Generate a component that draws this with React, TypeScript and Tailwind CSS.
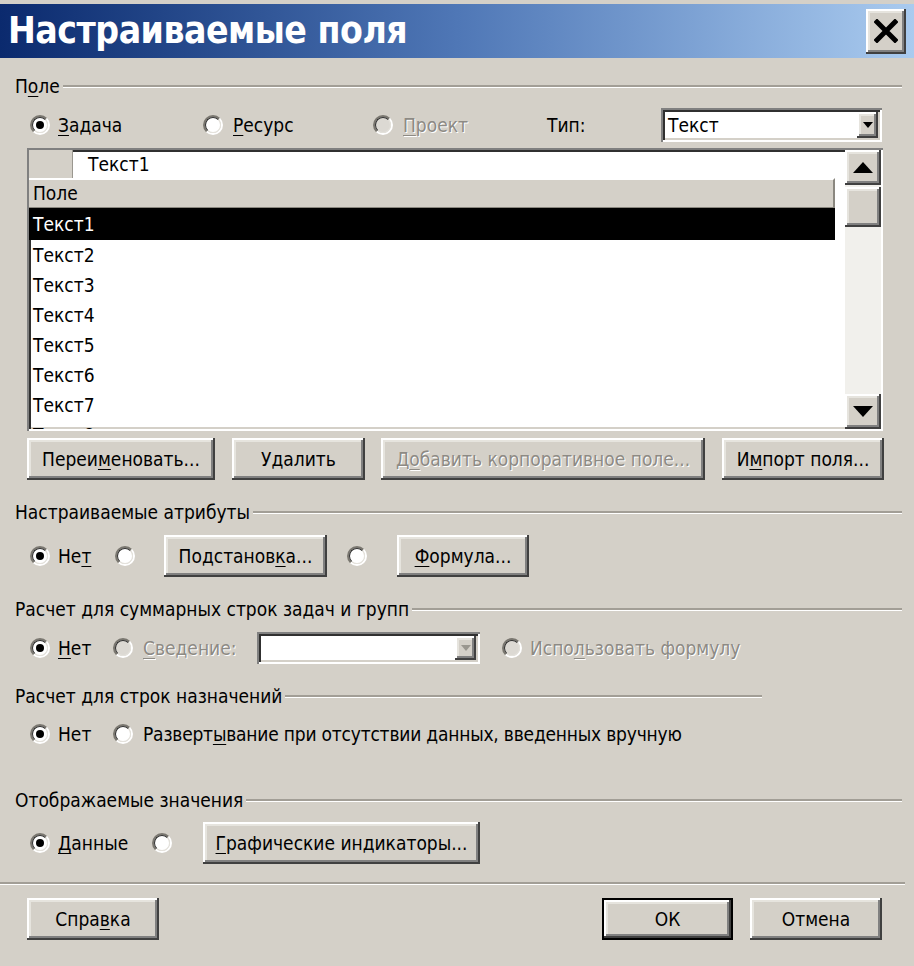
import React from 'react';

const FONT = "font-['DejaVu_Sans_Condensed','DejaVu_Sans',sans-serif]";
const RAISED =
  'bg-[#d4d0c8] shadow-[inset_-2px_-2px_0_#404040,inset_2px_2px_0_#ffffff,inset_-4px_-4px_0_#808080,inset_4px_4px_0_#e6e4de]';
const SUNKEN =
  'shadow-[inset_2px_2px_0_#808080,inset_-2px_-2px_0_#ffffff,inset_4px_4px_0_#303030,inset_-4px_-4px_0_#d4d0c8]';
const DISABLED = 'text-[#8d8a84] [text-shadow:1px_1px_0_#ffffff]';

// letter with access-key underline
const U = ({ children }: { children: React.ReactNode }) => (
  <span className="underline underline-offset-[3px] decoration-1">{children}</span>
);

function Radio({ checked = false, disabled = false }: { checked?: boolean; disabled?: boolean }) {
  return (
    <div className="relative w-[20px] h-[20px] shrink-0 rounded-full border-2 border-t-[#7a7770] border-l-[#7a7770] border-b-[#ffffff] border-r-[#ffffff]">
      <div className={`absolute inset-0 rounded-full border-[1.5px] border-t-[#303030] border-l-[#303030] border-b-[#e4e2dc] border-r-[#e4e2dc] ${disabled ? 'bg-[#dcd9d3]' : 'bg-white'}`} />
      {checked && <div className="absolute left-1/2 top-1/2 w-[8px] h-[8px] -ml-[4px] -mt-[4px] rounded-full bg-black" />}
    </div>
  );
}

function Btn({ w, children, disabled = false, def = false }: { w: string; children: React.ReactNode; disabled?: boolean; def?: boolean }) {
  const inner = (
    <div className={`${RAISED} h-full w-full flex items-center justify-center ${disabled ? DISABLED : 'text-black'}`}>
      {children}
    </div>
  );
  if (def) {
    return <div className={`${w} h-[42px] shrink-0 border-2 border-black`}>{inner}</div>;
  }
  return <div className={`${w} h-[42px] shrink-0`}>{inner}</div>;
}

function GroupHeader({ children, end = 'pr-[12px]' }: { children: React.ReactNode; end?: string }) {
  return (
    <div className={`flex items-center h-[20px] pl-[15px] ${end}`}>
      <span className="whitespace-nowrap">{children}</span>
      <div className="flex-1 ml-[3px] h-[3px] border-t-2 border-t-[#a29e96] border-b border-b-white" />
    </div>
  );
}

function ArrowDown({ color = '#000', size = 'small' }: { color?: string; size?: 'small' | 'big' }) {
  return size === 'big' ? (
    <svg width="20" height="12" viewBox="0 0 20 12"><path d="M0 0 H20 L10 11 Z" fill={color} /></svg>
  ) : (
    <svg width="10" height="6" viewBox="0 0 10 6"><path d="M0 0 H10 L5 6 Z" fill={color} /></svg>
  );
}

function Combo({ w, value, disabled = false }: { w: string; value?: string; disabled?: boolean }) {
  return (
    <div className={`${w} h-full shrink-0 bg-white ${SUNKEN} p-[4px] flex`}>
      <div className="flex-1 flex items-center pl-[3px] text-black">{value}</div>
      <div className={`${RAISED} w-[21px] h-full flex items-center justify-center`}>
        <ArrowDown color={disabled ? '#9a978f' : '#000'} />
      </div>
    </div>
  );
}

const ROWS = ['Текст2', 'Текст3', 'Текст4', 'Текст5', 'Текст6', 'Текст7', 'Текст8'];

export default function App() {
  return (
    <div className={`w-[914px] h-[966px] bg-[#d4d0c8] overflow-hidden text-[19px] leading-none text-black ${FONT}`}>
      {/* title bar */}
      <div className="pt-[4px]">
        <div className="h-[54px] bg-linear-to-r from-[#0b2a6e] via-[#4f77b6] to-[#aacbef] flex items-center justify-between pl-[8px] pr-[8px]">
          <span className="text-white font-bold text-[37px] tracking-[-0.5px] leading-none pb-[2px]">Настраиваемые поля</span>
          <div className={`${RAISED} w-[40px] h-[45px] flex items-center justify-center`}>
            <svg width="24" height="24" viewBox="0 0 24 24">
              <path d="M3 3 L21 21 M21 3 L3 21" stroke="#000" strokeWidth="5" strokeLinecap="square" />
            </svg>
          </div>
        </div>
      </div>

      <div className="mt-[18px]">
        <GroupHeader>П<U>о</U>ле</GroupHeader>
      </div>

      {/* radio row */}
      <div className="mt-[12px] h-[34px] flex items-center pl-[30px]">
        <div className="w-[173px] flex items-center">
          <Radio checked />
          <span className="ml-[8px]"><U>З</U>адача</span>
        </div>
        <div className="w-[170px] flex items-center">
          <Radio />
          <span className="ml-[10px]"><U>Р</U>есурс</span>
        </div>
        <div className="w-[174px] flex items-center">
          <Radio disabled />
          <span className={`ml-[10px] ${DISABLED}`}><U>П</U>роект</span>
        </div>
        <div className="w-[114px]">Тип:</div>
        <Combo w="w-[221px]" value="Текст" />
      </div>

      {/* list */}
      <div className={`mt-[6px] ml-[27px] w-[856px] h-[283px] bg-white ${SUNKEN} p-[2px] flex`}>
        <div className="flex-1 overflow-hidden flex flex-col">
          <div className="h-[28px] shrink-0 flex">
            <div className="w-[44px] bg-[#d4d0c8] border-r border-[#9a978f]" />
            <div className="flex-1 flex items-center pl-[15px]">Текст1</div>
          </div>
          <div className="h-[30px] shrink-0 mr-[10px] bg-[#d4d0c8] border-t-2 border-t-white border-b border-b-[#8a877f] border-r-2 border-r-[#8a877f] flex items-center pl-[4px]">
            Поле
          </div>
          <div className="h-[32px] shrink-0 mr-[10px] bg-black text-white flex items-center pl-[4px]">Текст1</div>
          {ROWS.map(r => (
            <div key={r} className="h-[30px] shrink-0 flex items-center pl-[4px]">{r}</div>
          ))}
        </div>
        <div className="w-[36px] flex flex-col bg-[#f1f0ec]">
          <div className={`${RAISED} h-[35px] flex items-center justify-center`}>
            <svg width="20" height="12" viewBox="0 0 20 12"><path d="M0 11 H20 L10 0 Z" fill="#000" /></svg>
          </div>
          <div className={`${RAISED} h-[40px] mt-[2px]`} />
          <div className="flex-1" />
          <div className={`${RAISED} h-[35px] flex items-center justify-center`}>
            <ArrowDown size="big" />
          </div>
        </div>
      </div>

      {/* list buttons */}
      <div className="mt-[7px] pl-[27px] flex">
        <Btn w="w-[188px]">Переи<U>м</U>еновать...</Btn>
        <div className="ml-[17px]"><Btn w="w-[133px]">Удалить</Btn></div>
        <div className="ml-[16px]"><Btn w="w-[324px]" disabled>Д<U>о</U>бавить корпоративное поле...</Btn></div>
        <div className="ml-[17px]"><Btn w="w-[162px]">И<U>м</U>порт поля...</Btn></div>
      </div>

      <div className="mt-[22px]">
        <GroupHeader>Настраиваемые атрибуты</GroupHeader>
      </div>
      <div className="mt-[13px] h-[42px] flex items-center pl-[30px]">
        <div className="w-[85px] flex items-center">
          <Radio checked />
          <span className="ml-[8px]">Не<U>т</U></span>
        </div>
        <div className="w-[49px] flex items-center"><Radio /></div>
        <Btn w="w-[163px]">Подстанов<U>к</U>а...</Btn>
        <div className="ml-[20px] w-[50px] flex items-center"><Radio /></div>
        <Btn w="w-[132px]"><U>Ф</U>ормула...</Btn>
      </div>

      <div className="mt-[22px]">
        <GroupHeader>Расчет для суммарных строк задач и групп</GroupHeader>
      </div>
      <div className="mt-[13px] h-[32px] flex items-center pl-[30px]">
        <div className="w-[83px] flex items-center">
          <Radio checked />
          <span className="ml-[8px]"><U>Н</U>ет</span>
        </div>
        <div className="w-[144px] flex items-center">
          <Radio disabled />
          <span className={`ml-[10px] ${DISABLED}`}><U>С</U>ведение:</span>
        </div>
        <Combo w="w-[223px]" disabled />
        <div className="ml-[22px] flex items-center">
          <Radio disabled />
          <span className={`ml-[8px] ${DISABLED}`}>Испо<U>л</U>ьзовать формулу</span>
        </div>
      </div>

      <div className="mt-[22px]">
        <GroupHeader end="pr-[152px]">Расчет для строк назначений</GroupHeader>
      </div>
      <div className="mt-[13px] h-[30px] flex items-center pl-[30px]">
        <div className="w-[83px] flex items-center">
          <Radio checked />
          <span className="ml-[8px]">Нет</span>
        </div>
        <div className="flex items-center">
          <Radio />
          <span className="ml-[10px] tracking-[-0.2px]">Разверт<U>ы</U>вание при отсутствии данных, введенных вручную</span>
        </div>
      </div>

      <div className="mt-[41px]">
        <GroupHeader>Отображаемые значения</GroupHeader>
      </div>
      <div className="mt-[12px] h-[42px] flex items-center pl-[30px]">
        <div className="w-[122px] flex items-center">
          <Radio checked />
          <span className="ml-[8px]"><U>Д</U>анные</span>
        </div>
        <div className="w-[51px] flex items-center"><Radio /></div>
        <Btn w="w-[277px]"><U>Г</U>рафические индикаторы...</Btn>
      </div>

      {/* separator */}
      <div className="mt-[18px] mr-[9px] h-[3px] border-t-2 border-t-[#a29e96] border-b border-b-white" />

      <div className="mt-[13px] pl-[27px] flex">
        <Btn w="w-[132px]">Спра<U>в</U>ка</Btn>
        <div className="ml-[443px]"><Btn w="w-[131px]" def>ОК</Btn></div>
        <div className="ml-[17px]"><Btn w="w-[132px]">Отмена</Btn></div>
      </div>
    </div>
  );
}
